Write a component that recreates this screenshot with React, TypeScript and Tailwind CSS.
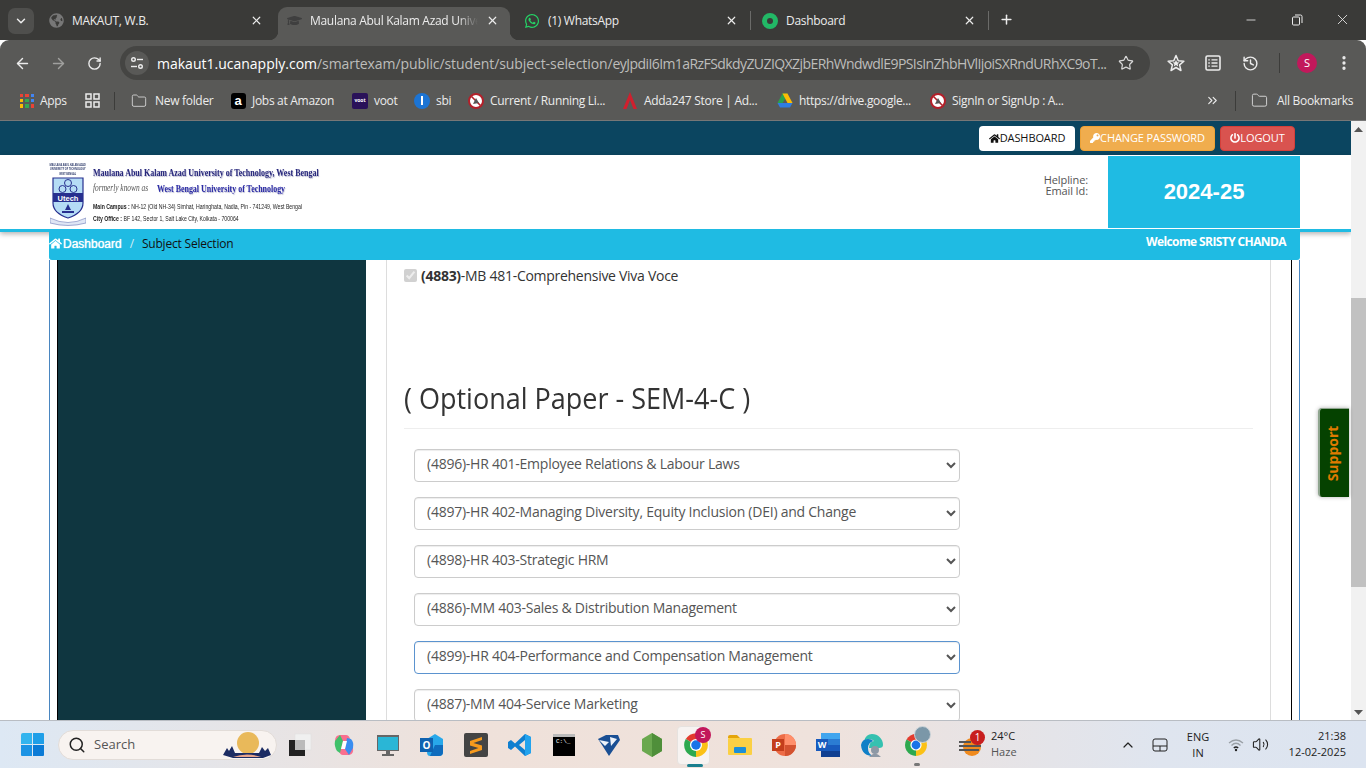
import React from "react";
import { ArrowLeft, ArrowRight, RotateCw, Star, X, Plus, Minus, MoreVertical, Folder, History, Search, ChevronDown, ChevronUp, ChevronsRight, Volume2 } from "lucide-react";
import { FaHome, FaKey, FaPowerOff, FaWhatsapp, FaGraduationCap, FaGlobeAmericas } from "react-icons/fa";

const Chrome = ({ s = 24 }: { s?: number }) => (
  <svg width={s} height={s} viewBox="0 0 24 24">
    <path d="M12 12 L2.5 6.5 A11 11 0 0 1 21.5 6.5 Z" fill="#e33b2e" />
    <path d="M12 12 L21.5 6.5 A11 11 0 0 1 12 23 Z" fill="#fbc116" />
    <path d="M12 12 L12 23 A11 11 0 0 1 2.5 6.5 Z" fill="#2da94f" />
    <circle cx="12" cy="12" r="5.6" fill="#fff" />
    <circle cx="12" cy="12" r="4.4" fill="#1a73e8" />
  </svg>
);

const Blocked = () => (
  <svg width="16" height="16" viewBox="0 0 16 16">
    <circle cx="8" cy="8" r="7" fill="#fff" stroke="#b3202a" strokeWidth="2" />
    <path d="M3.5 3.5 L12.5 12.5" stroke="#b3202a" strokeWidth="1.6" />
    <path d="M5 11 L8 5 L11 10 Z" fill="#555" />
  </svg>
);

const Drive = () => (
  <svg width="16" height="15" viewBox="0 0 16 15">
    <path d="M5.5 0.5 H10.5 L8 6 Z M5.5 0.5 L8 6 L5 11 L0.5 10 Z" fill="#2ba24c" />
    <path d="M5.5 0.5 H10.5 L15.5 10 H10.5 Z" fill="#fbbc04" />
    <path d="M0.5 10 H15.5 L13 14.5 H3 Z" fill="#2f7de1" />
  </svg>
);

const Tab = ({ cls, icon, title, active, sep, fade }: { cls: string; icon: React.ReactNode; title: string; active?: boolean; sep?: boolean; fade?: boolean }) => (
  <div className={`h-[33px] flex items-center shrink-0 relative ${cls} ${active ? "bg-[#595957] rounded-t-[9px]" : ""}`}>
    <span className="w-4 h-4 flex items-center justify-center shrink-0 mb-[6px]">{icon}</span>
    <span className={`ml-[8px] flex-1 min-w-0 text-[12px] tracking-[-0.3px] text-[#ececec] whitespace-nowrap overflow-hidden mb-[6px] ${fade ? "[mask-image:linear-gradient(to_right,black_88%,transparent)]" : ""}`}>{title}</span>
    <X size={13} strokeWidth={2.2} className="text-[#ececec] shrink-0 ml-[8px] mb-[6px]" />
    {sep && <span className="absolute right-0 top-[4px] h-[19px] w-px bg-[#6b6b69]" />}
    {active && <span className="absolute -left-[9px] bottom-0 w-[9px] h-[9px] bg-[radial-gradient(circle_at_0_0,transparent_9px,#595957_9.5px)]" />}
    {active && <span className="absolute -right-[9px] bottom-0 w-[9px] h-[9px] bg-[radial-gradient(circle_at_100%_0,transparent_9px,#595957_9.5px)]" />}
  </div>
);

type BM = { w: number; icon: React.ReactNode; label: string };
const marks: BM[] = [
  { w: 65, label: "Apps", icon: (
    <span className="grid grid-cols-3 gap-[2px] w-[14px] h-[14px]">
      {["#ea4335","#ea4335","#4285f4","#fbbc04","#34a853","#4285f4","#fbbc04","#34a853","#ea4335"].map((c, i) => <i key={i} style={{ background: c }} className="block" />)}
    </span>) },
  { w: 47, label: "", icon: (
    <svg width="15" height="15" viewBox="0 0 15 15" fill="none" stroke="#ececec" strokeWidth="1.5"><rect x="1" y="1" width="5" height="5" /><rect x="9" y="1" width="5" height="5" /><rect x="1" y="9" width="5" height="5" /><rect x="9" y="9" width="5" height="5" /></svg>
  ) },
  { w: 99, label: "New folder", icon: <Folder size={16} strokeWidth={1.4} className="text-[#d0d0d0]" /> },
  { w: 122, label: "Jobs at Amazon", icon: <span className="w-[15px] h-4 rounded-[3px] bg-black text-white text-[13px] font-bold flex items-center justify-center leading-none font-['Liberation_Sans',sans-serif]">a</span> },
  { w: 62, label: "voot", icon: <span className="w-4 h-4 rounded-[2px] bg-[#2a1259] text-white text-[5px] font-bold flex items-center justify-center leading-none tracking-normal">voot</span> },
  { w: 54, label: "sbi", icon: <span className="w-4 h-4 rounded-full bg-[#1c74d4] flex items-center justify-center"><span className="w-[2px] h-[9px] bg-white block" /></span> },
  { w: 154, label: "Current / Running Li...", icon: <Blocked /> },
  { w: 155, label: "Adda247 Store | Ad...", icon: <svg width="16" height="17" viewBox="0 0 16 17"><path d="M8 0 L15 17 H11.5 L8 8 L4.5 17 H1 Z" fill="#d0202e" /></svg> },
  { w: 153, label: "https://drive.google...", icon: <Drive /> },
  { w: 281, label: "SignIn or SignUp : A...", icon: <Blocked /> },
];

const papers = [
  "(4896)-HR 401-Employee Relations & Labour Laws",
  "(4897)-HR 402-Managing Diversity, Equity Inclusion (DEI) and Change",
  "(4898)-HR 403-Strategic HRM",
  "(4886)-MM 403-Sales & Distribution Management",
  "(4899)-HR 404-Performance and Compensation Management",
  "(4887)-MM 404-Service Marketing",
];

const Logo = () => (
  <div className="w-[36px] flex flex-col items-center shrink-0">
    <p className="text-[3.6px] leading-[4.4px] text-center text-[#34406f] font-bold whitespace-nowrap scale-x-[0.68]">MAULANA ABUL KALAM AZAD<br />UNIVERSITY OF TECHNOLOGY<br />WEST BENGAL</p>
    <svg width="36" height="49" viewBox="0 0 36 49" className="mt-[1px]">
      <path d="M3 1 H33 V26 Q33 36 18 41 Q3 36 3 26 Z" fill="#b5dcf5" stroke="#27308f" strokeWidth="1.2" />
      <circle cx="18" cy="6" r="3.5" fill="none" stroke="#27308f" />
      <circle cx="12.5" cy="12" r="3.5" fill="none" stroke="#27308f" />
      <circle cx="23.5" cy="12" r="3.5" fill="none" stroke="#27308f" />
      <rect x="3" y="16" width="30" height="9" fill="#27308f" />
      <text x="18" y="23.5" textAnchor="middle" fontSize="7.5" fontWeight="700" fill="#fff" fontFamily="Liberation Sans">Utech</text>
      <path d="M18 27 L21 33 H15 Z M12 34 H24 V36 H12 Z" fill="#27308f" />
      <path d="M0 41 Q18 50 36 41 L36 46 Q18 51 0 46 Z" fill="#dfe6f5" stroke="#6b78b5" strokeWidth="0.6" />
    </svg>
  </div>
);

const TB = ({ children }: { children: React.ReactNode }) => (
  <div className="w-[44px] h-[48px] flex items-center justify-center shrink-0 relative">{children}</div>
);

export default function App() {
  return (
    <div className="h-screen w-full overflow-hidden flex flex-col font-['Open_Sans','Noto_Sans',sans-serif] relative">
      {/* tab strip */}
      <div className="h-[40px] bg-[#3a3a38] flex items-end shrink-0 pl-[8px]">
        <div className="w-[26px] h-[26px] mb-[6px] rounded-[7px] bg-[#4f4f4d] flex items-center justify-center shrink-0">
          <ChevronDown size={14} strokeWidth={2.5} className="text-[#ececec]" />
        </div>
        <div className="w-[14px] shrink-0" />
        <div className="flex items-start h-[33px]">
          <Tab cls="w-[230px] pr-[15px]" title="MAKAUT, W.B." icon={<FaGlobeAmericas size={15} className="text-[#777]" />} />
          <Tab cls="w-[232px] pl-[8px] pr-[11px]" active fade title="Maulana Abul Kalam Azad University" icon={<FaGraduationCap size={15} className="text-[#3f3f3f]" />} />
          <Tab cls="w-[241px] pl-[14px] pr-[13px]" sep title="(1) WhatsApp" icon={<FaWhatsapp size={16} className="text-[#25d366]" />} />
          <Tab cls="w-[238px] pl-[11px] pr-[13px]" sep title="Dashboard" icon={<span className="w-4 h-4 rounded-full border-[5px] border-[#22b866] block" />} />
        </div>
        <Plus size={15} strokeWidth={2.4} className="text-[#ececec] ml-[10px] mb-[13px]" />
        <div className="flex-1" />
        <div className="flex items-center mb-[12px] text-[#ececec]">
          <Minus size={14} strokeWidth={1.4} className="mr-[33px]" />
          <svg width="12" height="12" viewBox="0 0 12 12" fill="none" stroke="currentColor" className="mr-[31px]"><rect x="1.5" y="3" width="7" height="8" rx="1" /><path d="M4 1 H9.5 A1.5 1.5 0 0 1 11 2.5 V9" /></svg>
          <X size={17} strokeWidth={1.2} className="mr-[15px]" />
        </div>
      </div>

      {/* toolbar */}
      <div className="h-[46px] bg-[#595957] flex items-center shrink-0 rounded-t-[9px] pl-[14px] text-[#ececec]">
        <ArrowLeft size={17} strokeWidth={2} />
        <ArrowRight size={17} strokeWidth={2} className="ml-[19px] text-[#a0a09e]" />
        <RotateCw size={15} strokeWidth={2.2} className="ml-[20px]" />
        <div className="ml-[18px] w-[1030px] h-[34px] rounded-full bg-[#454543] flex items-center pl-[5px] pr-[16px]">
          <span className="w-[24px] h-[24px] rounded-full bg-[#595957] flex items-center justify-center shrink-0">
            <svg width="14" height="14" viewBox="0 0 14 14" fill="none" stroke="#ececec" strokeWidth="1.4"><circle cx="3.5" cy="3.5" r="1.8" /><path d="M7 3.5 H13" /><circle cx="10.5" cy="10.5" r="1.8" /><path d="M1 10.5 H7" /></svg>
          </span>
          <span className="ml-[8px] flex-1 text-[14px] whitespace-nowrap overflow-hidden"><span className="text-white">makaut1.ucanapply.com</span><span className="text-[#bdbdbb] tracking-[-0.08px]">/smartexam/public/student/subject-selection/</span><span className="text-[#bdbdbb] tracking-[-0.58px]">eyJpdiI6Im1aRzFSdkdyZUZIQXZjbERhWndwdlE9PSIsInZhbHVlIjoiSXRndURhXC9oT...</span></span>
          <Star size={16} strokeWidth={1.8} className="ml-[11px] shrink-0 text-[#d8d8d8]" />
        </div>
        <svg width="18" height="18" viewBox="0 0 24 24" className="ml-[17px]" fill="none" stroke="#ececec" strokeWidth="2" strokeLinejoin="round"><path d="M12 2 L15 9 L22.5 9.6 L16.8 14.5 L18.6 22 L12 18 L5.4 22 L7.2 14.5 L1.5 9.6 L9 9 Z" /><path d="M12 8 L13.4 11 L16.5 11.3 L14.2 13.4 L14.9 16.5 L12 14.8 L9.1 16.5 L9.8 13.4 L7.5 11.3 L10.6 11 Z" fill="#ececec" stroke="none" /></svg>
        <svg width="16" height="16" viewBox="0 0 16 16" className="ml-[20px]" fill="none" stroke="#ececec" strokeWidth="1.6"><rect x="1" y="1" width="14" height="14" rx="1.5" /><path d="M6.5 4.8 H12.5 M6.5 8 H12.5 M6.5 11.2 H12.5 M3.3 4.8 H4.8 M3.3 8 H4.8 M3.3 11.2 H4.8" strokeWidth="1.3" /></svg>
        <History size={17} strokeWidth={2} className="ml-[21px]" />
        <span className="ml-[20px] w-px h-[20px] bg-[#3c3c3a]" />
        <span className="ml-[17px] w-[20px] h-[20px] rounded-full bg-[#c2185b] text-white text-[11px] flex items-center justify-center">S</span>
        <MoreVertical size={18} strokeWidth={2.4} className="ml-[18px]" />
      </div>

      {/* bookmarks */}
      <div className="h-[35px] bg-[#595957] flex items-center shrink-0 pl-[19px] pb-[5px] text-[12px] tracking-[-0.3px] text-[#ececec] border-b border-[#777]">
        {marks.map((m, i) => (
          <React.Fragment key={i}>
            <div style={{ width: m.w }} className="flex items-center shrink-0 whitespace-nowrap">
              <span className="w-4 flex justify-center shrink-0">{m.icon}</span>
              {m.label && <span className={i === 2 ? "ml-[8px]" : i === 0 ? "ml-[5px]" : "ml-[6px]"}>{m.label}</span>}
            </div>
            {i === 1 && <span className="w-px h-[18px] bg-[#3c3c3a] -ml-[17px] mr-[16px]" />}
          </React.Fragment>
        ))}
        <ChevronsRight size={15} strokeWidth={1.8} className="-ml-[6px]" />
        <span className="ml-[15px] w-px h-[20px] bg-[#3c3c3a]" />
        <Folder size={17} strokeWidth={1.4} className="ml-[15px] text-[#d0d0d0]" />
        <span className="ml-[9px] whitespace-nowrap">All Bookmarks</span>
      </div>

      {/* page */}
      <div className="flex-1 min-h-0 flex">
        <div className="flex-1 min-w-0 flex flex-col bg-white overflow-hidden">
          <div className="h-[34px] bg-[#0b4560] shrink-0 flex items-center justify-end pr-[56px] gap-[5px] text-[11px] tracking-[-0.1px]">
            <a className="h-[25px] w-[96px] rounded-[4px] bg-white text-[#111] flex items-center justify-center"><FaHome size={11} />DASHBOARD</a>
            <a className="h-[25px] w-[135px] rounded-[4px] bg-[#f0ad4e] border border-[#eea236] text-white flex items-center justify-center"><FaKey size={10} />CHANGE PASSWORD</a>
            <a className="h-[25px] w-[75px] rounded-[4px] bg-[#d9534f] border border-[#d43f3a] text-white flex items-center justify-center"><FaPowerOff size={10} />LOGOUT</a>
          </div>

          <div className="h-[77px] shrink-0 border-b-[3px] border-[#1fbbe3] shadow-[0_2px_5px_rgba(0,0,0,0.3)] flex pl-[50px] pr-[51px] relative z-10 bg-white">
            <div className="flex pt-[8px]">
              <Logo />
              <div className="ml-[7px] w-[230px] text-[#111] whitespace-nowrap">
                <div className="h-[18px] text-[11px] leading-[18px] font-bold text-[#27277c] font-['Liberation_Serif',serif] origin-left scale-x-[0.725] [text-shadow:1px_1px_1px_rgba(60,60,120,0.35)]">Maulana Abul Kalam Azad University of Technology, West Bengal</div>
                <div className="h-[16px] -mt-[1px] flex items-center font-['Liberation_Serif',serif]">
                  <span className="w-[64px] text-[9.5px] italic text-[#555] origin-left scale-x-[0.78]">formerly known as</span>
                  <span className="text-[11px] font-bold text-[#2a2aa5] origin-left scale-x-[0.72] [text-shadow:1px_1px_1px_rgba(60,60,120,0.35)]">West Bengal University of Technology</span>
                </div>
                <div className="mt-[5px] text-[7.2px] leading-[12px] font-['Liberation_Sans',sans-serif] text-[#222] origin-left scale-x-[0.72]"><b>Main Campus :</b> NH-12 (Old NH-34) Simhat, Haringhata, Nadia, Pin - 741249, West Bengal</div>
                <div className="text-[7.2px] leading-[12px] font-['Liberation_Sans',sans-serif] text-[#222] origin-left scale-x-[0.72]"><b>City Office :</b> BF 142, Sector 1, Salt Lake City, Kolkata - 700064</div>
              </div>
            </div>
            <div className="flex-1" />
            <div className="text-right text-[11px] tracking-[-0.1px] leading-[11px] text-[#555] pt-[19px] mr-[20px]">Helpline:<br />Email Id:</div>
            <div className="w-[192px] h-[72px] mt-[1px] pb-[2px] bg-[#1fbbe3] text-white text-[22px] font-bold flex items-center justify-center font-['Liberation_Sans',sans-serif]">2024-25</div>
          </div>

          <div className="-mt-[3px] ml-[49px] w-[1251px] h-[31px] shrink-0 bg-[#1fbbe3] rounded-b-[3px] flex items-center justify-between pr-[14px] relative z-20">
            <div className="flex items-center text-[12px] tracking-[-0.2px] pb-[2px]">
              <FaHome size={13} className="text-white" />
              <span className="ml-[1px] text-white text-[12px] tracking-normal font-['Liberation_Sans',sans-serif] [text-shadow:0_0_1px_#fff]">Dashboard</span>
              <span className="ml-[8px] text-[#d5eef5]">/</span>
              <span className="ml-[8px] text-[#111]">Subject Selection</span>
            </div>
            <span className="text-[12px] font-bold text-white -mt-[6px] tracking-[-0.6px]">Welcome SRISTY CHANDA</span>
          </div>

          <div className="flex-1 min-h-0 ml-[49px] w-[1251px] border-x border-[#4a86c0] px-[7px] flex">
            <div className="flex-1 flex border-x border-black">
              <aside className="w-[308px] bg-[#0f3640] shrink-0" />
              <div className="flex-1 mx-[20px] border-x border-[#ddd] px-[17px] overflow-hidden">
                <label className="flex items-center h-[20px] mt-[5px] text-[14px] tracking-[-0.28px] text-[#333]">
                  <input type="checkbox" checked disabled readOnly className="w-[13px] h-[13px] m-0" />
                  <span className="ml-[4px]"><b>(4883)</b>-MB 481-Comprehensive Viva Voce</span>
                </label>
                <h3 className="mt-[96px] text-[30px] leading-[33px] text-[#333] pb-[14px] border-b border-[#eee] whitespace-nowrap">
                  <span className="inline-block origin-left scale-x-[0.9]">( Optional Paper - SEM-4-C )</span>
                </h3>
                <div className="mt-[20px] ml-[10px] flex flex-col gap-[15px]">
                  {papers.map((p, i) => (
                    <select key={i} defaultValue={p} className={`w-[546px] h-[33px] shrink-0 rounded-[4px] bg-white pl-[8px] pr-[8px] pb-[4px] text-[14px] tracking-[-0.24px] text-[#555] border shadow-[inset_0_1px_1px_rgba(0,0,0,0.075)] ${i === 4 ? "border-[#5b93cf]" : "border-[#ccc]"}`}>
                      <option>{p}</option>
                    </select>
                  ))}
                </div>
              </div>
            </div>
          </div>
        </div>

        {/* scrollbar */}
        <div className="w-[15px] bg-[#f1f1f1] shrink-0 flex flex-col items-center">
          <svg width="9" height="5" viewBox="0 0 9 5" className="mt-[6px] shrink-0"><path d="M4.5 0 L9 5 H0 Z" fill="#555" /></svg>
          <div className="w-full h-[289px] bg-[#c1c1c1] mt-[166px] shrink-0" />
          <div className="flex-1" />
          <svg width="9" height="5" viewBox="0 0 9 5" className="mb-[5px] shrink-0"><path d="M4.5 5 L9 0 H0 Z" fill="#555" /></svg>
        </div>
      </div>

      {/* support tab */}
      <div className="absolute left-[1318px] top-[408px] w-[31px] h-[89px] bg-[#054200] rounded-l-[4px] border-l-2 border-t border-[#8fa58f] shadow-[0_0_4px_rgba(0,0,0,0.3)] flex items-center justify-center pr-[3px]">
        <span className="-rotate-90 text-[#e07b00] text-[14px] font-bold whitespace-nowrap">Support</span>
      </div>

      {/* taskbar */}
      <div className="h-[48px] shrink-0 border-t border-[#b9bdc3] bg-[linear-gradient(90deg,#dde8f4_0%,#efe1da_35%,#efe2dc_60%,#dfe5ef_85%,#dce4f0_100%)] flex items-center text-[#222]">
        <div className="ml-[21px] w-[23px] h-[23px] grid grid-cols-2 gap-[1px] shrink-0">
          <i className="block bg-[#33b4ee] rounded-tl-[2px]" /><i className="block bg-[#1f9fe8] rounded-tr-[1px]" />
          <i className="block bg-[#1b93e4] rounded-bl-[1px]" /><i className="block bg-[#0b7bd6] rounded-br-[1px]" />
        </div>
        <div className="ml-[14px] w-[219px] h-[30px] rounded-full bg-[#f8f3f0] border border-[#e2dcd8] flex items-center pl-[9px] shrink-0 overflow-hidden">
          <Search size={18} strokeWidth={2} className="text-[#222]" />
          <span className="ml-[8px] text-[13px] text-[#555] flex-1">Search</span>
          <svg width="48" height="28" viewBox="0 0 48 28" className="shrink-0 mr-[5px]">
            <circle cx="25" cy="12" r="11" fill="#e9b95a" />
            <path d="M0 24 L4 17 L6 20 L9 15 L12 22 H36 L39 16 L42 20 L45 17 L48 24 L40 27 H10 Z" fill="#1c2c63" />
            <path d="M10 26 Q24 21 38 26 Z" fill="#e8a58c" />
          </svg>
        </div>
        <div className="ml-px flex">
          <TB>
            <svg width="24" height="24" viewBox="0 0 24 24"><rect x="7" y="1" width="16" height="16" fill="#f0f0f0" stroke="#ddd" strokeWidth="0.5" /><rect x="1" y="7" width="16" height="16" fill="#222" /><rect x="7" y="7" width="10" height="10" fill="#bbb" /></svg>
          </TB>
          <TB>
            <svg width="24" height="24" viewBox="0 0 24 24"><path d="M8 2 H14 Q17 2 18 6 L21 15 Q22 21 17 22 H11 Q8 22 7 18 L3 8 Q3 2 8 2 Z" fill="#f96f8f" /><path d="M8 2 L3 8 Q2 13 5 18 L8 20 L11 8 Z" fill="#3fc16a" /><path d="M17 22 L21 15 Q22 9 19 6 L15 5 L13 16 Z" fill="#3a8df0" /><path d="M11 8 H15 L13 16 H9 Z" fill="#fff" /></svg>
          </TB>
          <TB>
            <svg width="22" height="24" viewBox="0 0 22 24"><rect x="0" y="2" width="22" height="16" fill="#666" /><rect x="1" y="4" width="20" height="13" fill="#2ab6d6" /><rect x="9" y="18" width="4" height="3" fill="#666" /><rect x="5" y="21" width="12" height="2" fill="#666" /></svg>
          </TB>
          <TB>
            <div className="relative w-[24px] h-[24px]">
              <svg width="24" height="24" viewBox="0 0 24 24"><path d="M7 6 L15 1 L23 6 V19 Q23 23 19 23 H10 Q7 23 7 19 Z" fill="#28a8ea" /><path d="M15 12 H23 V19 Q23 23 19 23 H10 Z" fill="#0f6cbd" /></svg>
              <span className="absolute left-0 top-[5px] w-[13px] h-[14px] bg-[#0f62b0] text-white text-[10px] font-bold flex items-center justify-center leading-none">O</span>
            </div>
          </TB>
          <TB>
            <svg width="24" height="24" viewBox="0 0 24 24"><rect width="24" height="24" rx="2" fill="#444" /><path d="M18 4 L6 8 V12.5 L14.5 15 L6 18 V21 L18 17 V12.5 L9.5 10 L18 7 Z" fill="#f79a1d" /></svg>
          </TB>
          <TB>
            <svg width="24" height="24" viewBox="0 0 24 24"><path d="M17 1 L23 4 V20 L17 23 L7 13.5 L3 17 L0 15 V9 L3 7 L7 10.5 Z M17 7 L11 12 L17 17 Z" fill="#0f7fd0" fillRule="evenodd" /><path d="M17 1 L23 4 V20 L17 23 V17 V7 Z" fill="#22a3ee" /></svg>
          </TB>
          <TB>
            <div className="w-[22px] h-[22px] bg-black border-t-[3px] border-[#bbb] text-white text-[6px] leading-[7px] font-['Liberation_Mono',monospace] pl-[3px] pt-[1px]">C:\_</div>
          </TB>
          <TB>
            <svg width="24" height="24" viewBox="0 0 24 24"><path d="M2 6 L10 2 H22 L24 7 L13 23 L6 12 Z" fill="#1a4f94" /><path d="M3 7 L13 9 L9 13 Z M14 4 L21 6 L15 13 Z" fill="#eef3fa" /></svg>
          </TB>
          <TB>
            <svg width="22" height="24" viewBox="0 0 22 24"><path d="M11 0 L21 6 V18 L11 24 L1 18 V6 Z" fill="#6aa84f" /><path d="M11 0 L21 6 V18 L11 24 Z" fill="#4f8f3a" /></svg>
          </TB>
          <TB>
            <div className="absolute left-[3px] top-[5px] w-[33px] h-[39px] rounded-[4px] bg-[#f7f3f1] border border-[#e6e2df]" />
            <span className="relative"><Chrome s={26} /></span>
            <span className="absolute left-[21px] top-[6px] w-[16px] h-[16px] rounded-full bg-[#c2185b] text-white text-[9px] flex items-center justify-center">S</span>
            <span className="absolute left-[13px] bottom-[2px] w-[16px] h-[3px] rounded-full bg-[#1b7f8e]" />
          </TB>
          <TB>
            <svg width="24" height="22" viewBox="0 0 24 22"><path d="M0 3 Q0 1 2 1 H9 L12 4 H0 Z" fill="#e5a50a" /><rect x="0" y="4" width="24" height="17" rx="1" fill="#fbd044" /><rect x="6" y="13" width="12" height="6" rx="1" fill="#1d8fd8" /></svg>
          </TB>
          <TB>
            <div className="relative w-[24px] h-[24px]">
              <svg width="24" height="24" viewBox="0 0 24 24"><circle cx="13" cy="12" r="11" fill="#ed6c47" /><path d="M13 12 V1 A11 11 0 0 1 24 12 Z" fill="#ff8f6b" /><path d="M13 12 H24 A11 11 0 0 1 13 23 Z" fill="#d35230" /></svg>
              <span className="absolute left-0 top-[6px] w-[12px] h-[12px] bg-[#c43e1c] text-white text-[9px] font-bold flex items-center justify-center leading-none">P</span>
            </div>
          </TB>
          <TB>
            <div className="relative w-[24px] h-[24px]">
              <div className="w-[19px] h-[24px] ml-[5px] flex flex-col">
                <i className="block flex-1 bg-[#41a5ee]" /><i className="block flex-1 bg-[#2b7cd3]" /><i className="block flex-1 bg-[#185abd]" /><i className="block flex-1 bg-[#103f91]" />
              </div>
              <span className="absolute left-0 top-[6px] w-[12px] h-[12px] bg-[#185abd] text-white text-[9px] font-bold flex items-center justify-center leading-none">W</span>
            </div>
          </TB>
          <TB>
            <svg width="24" height="24" viewBox="0 0 24 24"><path d="M12 1 A11 11 0 0 1 23 12 Q23 15 19 15 H9 Q9 9 14 8 Q10 4 4 8 Q6 1 12 1 Z" fill="#35c1b0" /><path d="M1 12 Q2 6 8 6 Q12 6 13 8 Q8 10 8 15 Q8 21 13 23 Q2 23 1 12 Z" fill="#0f7fc7" /><circle cx="15" cy="17" r="4" fill="#8d98a5" /><path d="M9 24 Q15 17 21 24 Z" fill="#8d98a5" /></svg>
          </TB>
          <TB>
            <span className="-ml-[1px]"><Chrome s={24} /></span>
            <span className="absolute left-[20px] top-[5px] w-[17px] h-[17px] rounded-full bg-[#7b97a8] border border-[#cdd5da]" />
            <span className="absolute left-[20px] bottom-[3px] w-[6px] h-[3px] rounded-full bg-[#777]" />
          </TB>
        </div>
        <div className="ml-[21px] w-[24px] h-[24px] relative shrink-0">
          <svg width="24" height="24" viewBox="0 0 24 24"><circle cx="13" cy="14" r="9" fill="#f08a1d" /><path d="M0 9 H12 M0 13 H22 M0 17 H20" stroke="#555" strokeWidth="1.8" /></svg>
          <span className="absolute left-[11px] -top-[3px] w-[15px] h-[15px] rounded-full bg-[#c81e1e] text-white text-[10px] flex items-center justify-center">1</span>
        </div>
        <div className="ml-[8px] text-[11px] leading-[16px] w-[61px] -mt-[1px]">
          <div>24°C</div>
          <div className="text-[#555]">Haze</div>
        </div>
        <ChevronUp size={16} strokeWidth={1.8} className="ml-[68px]" />
        <svg width="16" height="14" viewBox="0 0 16 14" fill="none" stroke="#222" className="ml-[16px]"><rect x="1" y="1" width="14" height="12" rx="2" /><path d="M1 8 H15 M8 8 V13" /></svg>
        <div className="ml-[16px] text-[11px] leading-[16px] text-center w-[28px]">ENG<br />IN</div>
        <svg width="16" height="14" viewBox="0 0 16 14" fill="none" className="ml-[16px]"><path d="M1 5 Q8 -1 15 5" stroke="#9aa0a6" strokeWidth="1.3" /><path d="M3.5 7.5 Q8 3 12.5 7.5" stroke="#9aa0a6" strokeWidth="1.3" /><path d="M5.8 10 Q8 8 10.2 10" stroke="#222" strokeWidth="1.4" /><circle cx="8" cy="12" r="1.2" fill="#222" /></svg>
        <Volume2 size={17} strokeWidth={1.5} className="ml-[8px]" />
        <div className="flex-1 text-right text-[11px] leading-[16px] pr-[20px] -mt-[1px]">21:38<br />12-02-2025</div>
      </div>
    </div>
  );
}
